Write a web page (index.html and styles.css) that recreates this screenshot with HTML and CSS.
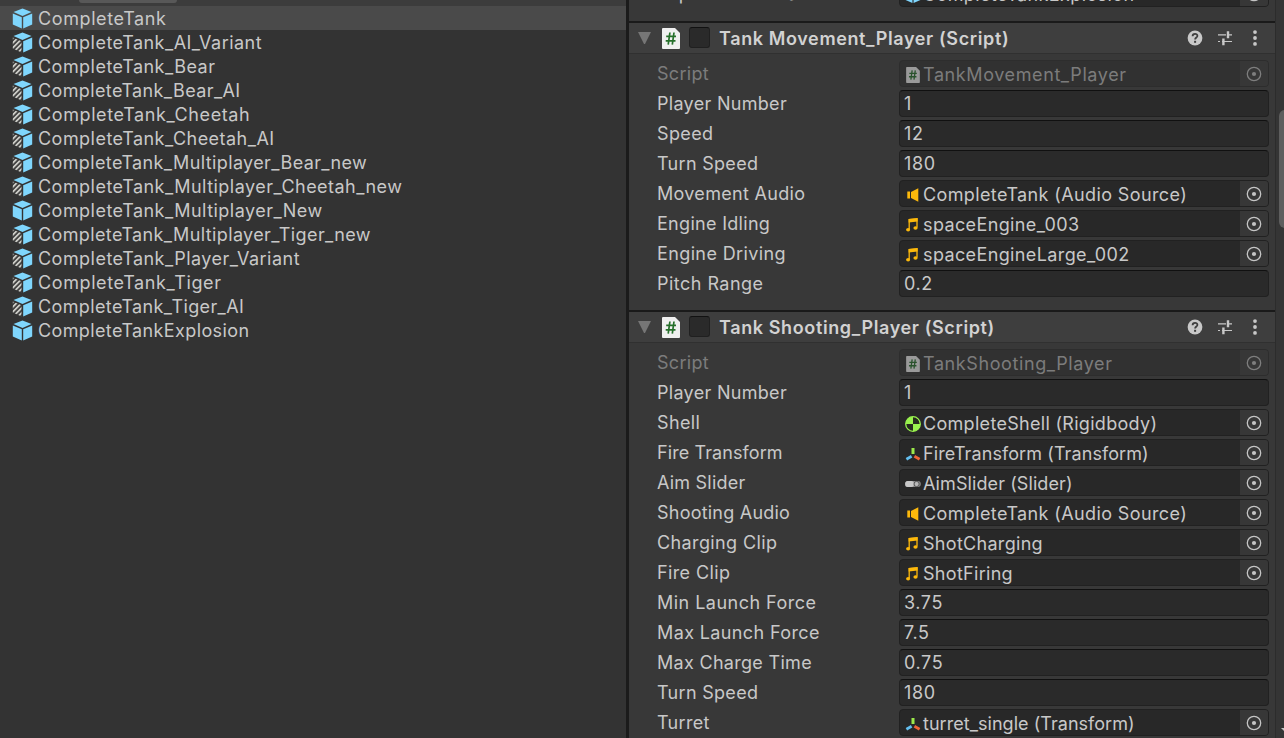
FILE: index.html
```
<!DOCTYPE html>
<html lang="en">
<head>
<meta charset="utf-8">
<title>Inspector</title>
<link rel="stylesheet" href="styles.css">
</head>
<body>
<svg class="defs" aria-hidden="true">
  <defs>
    <pattern id="hatch" width="3.5" height="3.5" patternUnits="userSpaceOnUse" patternTransform="rotate(-45)">
      <rect width="3.5" height="1.9" fill="#c9c9c4"/>
    </pattern>
    <symbol id="cube" viewBox="0 0 20 21">
      <path d="M10 0.4 19 4 10 7.9 1 4Z" fill="#7fd6fd"/>
      <path d="M0.3 5.4 9.3 9.3V20.6L0.3 16.6Z" fill="#7fd6fd"/>
      <path d="M19.7 5.4 10.7 9.3V20.6L19.7 16.6Z" fill="#7fd6fd"/>
    </symbol>
    <symbol id="variant" viewBox="0 0 20 21">
      <path d="M10 0.4 19 4 10 7.9 1 4Z" fill="#7fd6fd"/>
      <path d="M0.3 5.4 9 9.3V20.6L0.3 16.6Z" fill="url(#hatch)"/>
      <path d="M19.7 5.4 10.7 9.3V20.6L19.7 16.6Z" fill="#7fd6fd"/>
    </symbol>
    <symbol id="script" viewBox="0 0 18 21">
      <path d="M1 0H13L18 5V20a1 1 0 0 1-1 1H1a1 1 0 0 1-1-1V1a1 1 0 0 1 1-1Z" fill="#f0f0f0"/>
      <path d="M7.9 4.5 6.2 16.6M12 4.5 10.3 16.6M4.2 8.3H14M3.7 12.8H13.5" stroke="#26702b" stroke-width="1.7" fill="none"/>
    </symbol>
    <symbol id="audio" viewBox="0 0 12 14">
      <path d="M0.3 3.5H3V10.5H0.3ZM4 4 11.3 0.2V13.8L4 10Z" fill="#fdb90b"/>
    </symbol>
    <symbol id="note" viewBox="0 0 12 14">
      <path d="M3.2 11V1.6L11 0.8V9.6" fill="none" stroke="#fdb90b" stroke-width="1.3"/>
      <path d="M2.6 1 11.6 0.2V3.6L2.6 4.4Z" fill="#fdb90b"/>
      <ellipse cx="2.1" cy="11.7" rx="2" ry="1.7" fill="#fdb90b"/>
      <ellipse cx="9.5" cy="10" rx="2.1" ry="1.7" fill="#fdb90b"/>
    </symbol>
    <symbol id="body" viewBox="0 0 16 16">
      <circle cx="8" cy="8" r="7.3" fill="#272b20" stroke="#99f24e" stroke-width="1.3"/>
      <path d="M8 8V.7A7.3 7.3 0 0 0 .7 8ZM8 8V15.3A7.3 7.3 0 0 0 15.3 8Z" fill="#99f24e"/>
    </symbol>
    <symbol id="axes" viewBox="0 0 16 14">
      <path d="M8 1V7" stroke="#9be84b" stroke-width="3"/>
      <path d="M6.6 9.2 1.4 12.2" stroke="#63bff0" stroke-width="2.8"/>
      <path d="M9.4 9.2 14.6 12.2" stroke="#ef6338" stroke-width="2.8"/>
    </symbol>
    <symbol id="slider" viewBox="0 0 16 8">
      <rect x="0.2" y="1" width="15.6" height="6" rx="3" fill="#8c8c8c"/>
      <rect x="0.2" y="1" width="8.6" height="6" rx="2.5" fill="#c8c8c8"/>
      <circle cx="11.6" cy="4" r="2.6" fill="#b8b8b8" stroke="#555" stroke-width="1"/>
    </symbol>
    <symbol id="picker" viewBox="0 0 16 16">
      <circle cx="8" cy="8" r="6.7" fill="none" stroke="#c4c4c4" stroke-width="1.3"/>
      <circle cx="8" cy="8" r="2.1" fill="#c4c4c4"/>
    </symbol>
    <symbol id="help" viewBox="0 0 16 16">
      <circle cx="8" cy="8" r="7.4" fill="#c8c8c8"/>
      <path d="M5.6 6.2C5.6 3 10.6 3.1 10.4 6 10.3 7.6 8.1 7.5 8.1 9.6" fill="none" stroke="#3e3e3e" stroke-width="1.8"/>
      <rect x="7.1" y="10.8" width="2" height="2" fill="#3e3e3e"/>
    </symbol>
    <symbol id="preset" viewBox="0 0 16 16">
      <path d="M1 4.8H9M10 4.8H15M1 11.5H3M5 11.5H15" stroke="#c8c8c8" stroke-width="1.2"/>
      <path d="M11 1.2V8.2M6.4 8.4V15.2" stroke="#c8c8c8" stroke-width="2.4"/>
    </symbol>
    <symbol id="menu" viewBox="0 0 6 16">
      <circle cx="3" cy="2.1" r="1.9" fill="#c8c8c8"/><circle cx="3" cy="8" r="1.9" fill="#c8c8c8"/><circle cx="3" cy="13.9" r="1.9" fill="#c8c8c8"/>
    </symbol>
  </defs>
</svg>
<div class="window">
  <div class="project">
    <div class="search"><div class="pill"></div></div>
    <ul class="assets">
      <li class="selected"><svg><use href="#cube"/></svg>CompleteTank</li>
      <li class="t5"><svg><use href="#variant"/></svg>CompleteTank_AI_Variant</li>
      <li class="t5"><svg><use href="#variant"/></svg>CompleteTank_Bear</li>
      <li class="t4"><svg><use href="#variant"/></svg>CompleteTank_Bear_AI</li>
      <li><svg><use href="#variant"/></svg>CompleteTank_Cheetah</li>
      <li class="t5"><svg><use href="#variant"/></svg>CompleteTank_Cheetah_AI</li>
      <li class="t4"><svg><use href="#variant"/></svg>CompleteTank_Multiplayer_Bear_new</li>
      <li class="t5"><svg><use href="#variant"/></svg>CompleteTank_Multiplayer_Cheetah_new</li>
      <li class="t5"><svg><use href="#cube"/></svg>CompleteTank_Multiplayer_New</li>
      <li class="t4"><svg><use href="#variant"/></svg>CompleteTank_Multiplayer_Tiger_new</li>
      <li class="t5"><svg><use href="#variant"/></svg>CompleteTank_Player_Variant</li>
      <li><svg><use href="#variant"/></svg>CompleteTank_Tiger</li>
      <li class="t4"><svg><use href="#variant"/></svg>CompleteTank_Tiger_AI</li>
      <li class="t4"><svg><use href="#cube"/></svg>CompleteTankExplosion</li>
    </ul>
  </div>
  <div class="inspector">
    <div class="previous">
      <div class="row"><label>Explosion Prefab</label><div class="object"><svg class="kind prefab"><use href="#cube"/></svg><span class="t4">CompleteTankExplosion</span><i><svg><use href="#picker"/></svg></i></div></div>
    </div>
    <section>
      <header><b class="fold"></b><svg class="file"><use href="#script"/></svg><b class="check"></b><h2>Tank Movement_Player (Script)</h2><svg class="help"><use href="#help"/></svg><svg class="preset"><use href="#preset"/></svg><svg class="menu"><use href="#menu"/></svg></header>
      <div class="rows">
        <div class="row disabled"><label class="t3">Script</label><div class="object"><svg class="kind doc"><use href="#script"/></svg><span>TankMovement_Player</span><i><svg><use href="#picker"/></svg></i></div></div>
        <div class="row"><label class="t3">Player Number</label><div class="value">1</div></div>
        <div class="row"><label class="t4">Speed</label><div class="value">12</div></div>
        <div class="row"><label class="t3">Turn Speed</label><div class="value">180</div></div>
        <div class="row"><label class="t3">Movement Audio</label><div class="object"><svg class="kind audio"><use href="#audio"/></svg><span class="t4">CompleteTank (Audio Source)</span><i><svg><use href="#picker"/></svg></i></div></div>
        <div class="row"><label class="t3">Engine Idling</label><div class="object"><svg class="kind note"><use href="#note"/></svg><span class="t4">spaceEngine_003</span><i><svg><use href="#picker"/></svg></i></div></div>
        <div class="row"><label class="t4">Engine Driving</label><div class="object"><svg class="kind note"><use href="#note"/></svg><span class="t4">spaceEngineLarge_002</span><i><svg><use href="#picker"/></svg></i></div></div>
        <div class="row"><label class="t5">Pitch Range</label><div class="value">0.2</div></div>
      </div>
    </section>
    <section>
      <header><b class="fold"></b><svg class="file"><use href="#script"/></svg><b class="check"></b><h2>Tank Shooting_Player (Script)</h2><svg class="help"><use href="#help"/></svg><svg class="preset"><use href="#preset"/></svg><svg class="menu"><use href="#menu"/></svg></header>
      <div class="rows">
        <div class="row disabled"><label class="t3">Script</label><div class="object"><svg class="kind doc"><use href="#script"/></svg><span>TankShooting_Player</span><i><svg><use href="#picker"/></svg></i></div></div>
        <div class="row"><label class="t3">Player Number</label><div class="value">1</div></div>
        <div class="row"><label class="t4">Shell</label><div class="object"><svg class="kind wide"><use href="#body"/></svg><span class="t3">CompleteShell (Rigidbody)</span><i><svg><use href="#picker"/></svg></i></div></div>
        <div class="row"><label class="t1">Fire Transform</label><div class="object"><svg class="kind"><use href="#axes"/></svg><span class="t1">FireTransform (Transform)</span><i><svg><use href="#picker"/></svg></i></div></div>
        <div class="row"><label class="t2">Aim Slider</label><div class="object"><svg class="kind wide"><use href="#slider"/></svg><span class="t1">AimSlider (Slider)</span><i><svg><use href="#picker"/></svg></i></div></div>
        <div class="row"><label class="t2">Shooting Audio</label><div class="object"><svg class="kind audio"><use href="#audio"/></svg><span class="t4">CompleteTank (Audio Source)</span><i><svg><use href="#picker"/></svg></i></div></div>
        <div class="row"><label class="t4">Charging Clip</label><div class="object"><svg class="kind note"><use href="#note"/></svg><span class="t3">ShotCharging</span><i><svg><use href="#picker"/></svg></i></div></div>
        <div class="row"><label class="t4">Fire Clip</label><div class="object"><svg class="kind note"><use href="#note"/></svg><span class="t3">ShotFiring</span><i><svg><use href="#picker"/></svg></i></div></div>
        <div class="row"><label class="t5">Min Launch Force</label><div class="value">3.75</div></div>
        <div class="row"><label class="t4">Max Launch Force</label><div class="value">7.5</div></div>
        <div class="row"><label class="t3">Max Charge Time</label><div class="value">0.75</div></div>
        <div class="row"><label class="t3">Turn Speed</label><div class="value">180</div></div>
        <div class="row"><label class="t3">Turret</label><div class="object"><svg class="kind"><use href="#axes"/></svg><span class="t0">turret_single (Transform)</span><i><svg><use href="#picker"/></svg></i></div></div>
      </div>
    </section>
  </div>
  <div class="scroll"><div class="thumb"></div><div class="arrow"></div></div>
</div>
</body>
</html>
```
FILE: styles.css
```
* { box-sizing: border-box; }
body { margin: 0; overflow: hidden; background: #383838; color: #c8c8c8; font: 18px/24px Inter, "Liberation Sans", sans-serif; letter-spacing: 0.6px; }
.defs { position: absolute; width: 0; height: 0; }
.window { display: flex; width: 1284px; height: 738px; overflow: hidden; }

/* tracking steps */
.t0 { letter-spacing: 0.04px; }
.t1 { letter-spacing: 0.09px; }
.t2 { letter-spacing: 0.22px; }
.t3 { letter-spacing: 0.3px; }
.t4 { letter-spacing: 0.38px; }
.t5 { letter-spacing: 0.47px; }

.project { width: 626px; background: #333; }
.search { height: 6px; background: #3c3c3c; padding-left: 79px; }
.pill { width: 98px; height: 3px; background: #585858; border-radius: 0 0 6px 6px; }
.assets { list-style: none; margin: 0; padding: 0; }
.assets li { display: flex; align-items: center; height: 24px; padding: 1px 0 0 12px; white-space: nowrap; }
.assets svg { width: 21px; height: 21px; margin: 0 5px 1px 0; flex: none; }
.assets .selected { background: #4a4a4a; }
.inspector { width: 649px; border-left: 3px solid #1b1b1b; overflow: hidden; }
.previous { height: 21px; display: flex; flex-direction: column; justify-content: flex-end; padding-bottom: 11px; overflow: hidden; }
section { border-top: 2px solid #1a1a1a; padding-bottom: 10px; }
header { display: flex; align-items: center; height: 31px; background: #3e3e3e; border-bottom: 1px solid #303030; padding-left: 9px; }
.fold { border: 6px solid transparent; border-top: 12px solid #767676; border-bottom: 0; width: 13px; margin-right: 11px; }
.file { width: 18px; height: 21px; margin-right: 9px; }
.check { width: 21px; height: 21px; background: #2a2a2a; border: 1px solid #202020; border-top-color: #111; border-radius: 3px; margin: 0 9px 1px 0; }
h2 { flex: 1; margin: 0; padding-top: 2px; font-size: 18px; font-weight: 600; color: #d2d2d2; letter-spacing: 0.62px; white-space: nowrap; }
.help { width: 16px; height: 16px; margin-right: 14px; }
.preset { width: 16px; height: 16px; margin-right: 19px; }
.menu { width: 6px; height: 16px; margin-right: 17px; }
.rows { padding-top: 6px; }
.row { display: flex; flex: none; height: 30px; padding: 0 6px 0 28px; white-space: nowrap; }
.row label { width: 242px; padding-top: 2px; }
.value, .object { width: 370px; height: 27px; border-radius: 4px; background: #2a2a2a; border: 1px solid #212121; }
.value { border-top-color: #101010; padding: 1px 0 0 4px; line-height: 24px; }
.object { display: flex; align-items: center; background: #282828; padding-left: 5px; overflow: hidden; }
.object span { flex: 1; line-height: 25px; padding-top: 2px; }
.kind { width: 16px; height: 14px; margin: 2px 2px 0 0; flex: none; }
.wide { height: 16px; }
.prefab { height: 18px; }
.audio { height: 14px; }
.note { width: 14px; height: 14px; margin-right: 4px; }
.doc { height: 16px; opacity: .55; }
.object i { display: flex; align-items: center; justify-content: center; width: 28px; height: 25px; background: #373737; }
.object i svg { width: 16px; height: 16px; }
.disabled label, .disabled span { color: #7c7c7c; }
.disabled .object { background: #313131; border-color: #2d2d2d; }
.disabled i svg { opacity: .5; }
.scroll { display: flex; flex-direction: column; width: 9px; border-left: 1px solid #2c2c2c; background: #353535; padding: 110px 0 0 3px; overflow: hidden; }
.thumb { width: 14px; height: 119px; background: #5e5e5e; border-radius: 6px; }
.arrow { margin: 500px 0 0 2px; border: 5px solid transparent; border-top-color: #c4c4c4; width: 10px; }
```
